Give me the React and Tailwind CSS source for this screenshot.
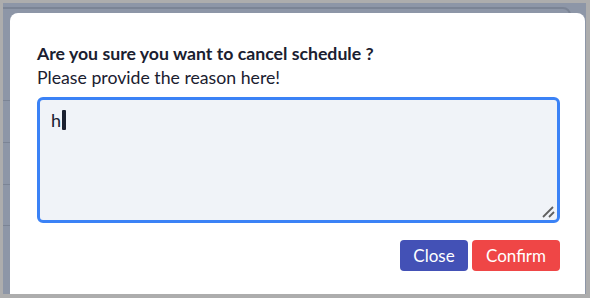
import React from "react";

export default function App() {
  const font = { fontFamily: '"Source Sans Pro", Lato, "Noto Sans", sans-serif' };
  return (
    <div className="w-[590px] h-[298px] bg-[#adadad] pt-[3px] pl-[3px] pr-[4px] pb-[4px] flex">
      <div className="relative flex-1 bg-[#8d96a7] overflow-hidden pl-[7px] pt-[10px]">
        {/* underlying page hints, seen through the backdrop */}
        <div className="absolute left-[-20px] top-[4px] w-[588px] h-[300px] rounded-[8px] border-[2px] border-[#7b8495]"></div>
        <div className="absolute left-0 top-[97px] w-[7px] h-[1px] bg-[#7b8495]"></div>
        <div className="absolute left-0 top-[139px] w-[7px] h-[1px] bg-[#7b8495]"></div>
        <div className="absolute left-0 top-[181px] w-[7px] h-[1px] bg-[#7b8495]"></div>
        <div className="absolute left-0 top-[222px] w-[7px] h-[1px] bg-[#7b8495]"></div>
        <div className="relative w-[575px] h-[300px] bg-white rounded-t-[8px] pl-[27px] pr-[25px] pt-[29px]" style={font}>
          <div className="text-[17.7px] leading-[24px] font-bold text-[#1a2030]">
            Are you sure you want to cancel schedule ?
          </div>
          <div className="text-[17.7px] leading-[24px] text-[#1a2030]">Please provide the reason here!</div>
          <div className="mt-[7px] h-[126px] rounded-[6px] border-[3px] border-[#3b82f6] bg-[#f0f3f8] relative pl-[11px] pt-[9px]">
            <div className="flex items-center text-[18px] leading-[22px] text-[#1a2030]">
              <span>h</span>
              <span className="inline-block w-[4px] h-[20px] bg-[#1a2030] rounded-[1px] ml-[1px]"></span>
            </div>
            <svg className="absolute right-[1px] bottom-[1px]" width="15" height="15" viewBox="0 0 15 15">
              <line x1="2" y1="13" x2="12" y2="3" stroke="#5f5f5f" strokeWidth="1.8" />
              <line x1="8" y1="13" x2="13" y2="8" stroke="#5f5f5f" strokeWidth="1.8" />
            </svg>
          </div>
          <div className="flex justify-end gap-[4px] mt-[17px]">
            <button className="w-[68px] h-[31px] rounded-[4px] bg-[#4351b6] text-white text-[17px]">Close</button>
            <button className="w-[88px] h-[31px] rounded-[4px] bg-[#ef4646] text-white text-[17px]">Confirm</button>
          </div>
        </div>
      </div>
    </div>
  );
}
